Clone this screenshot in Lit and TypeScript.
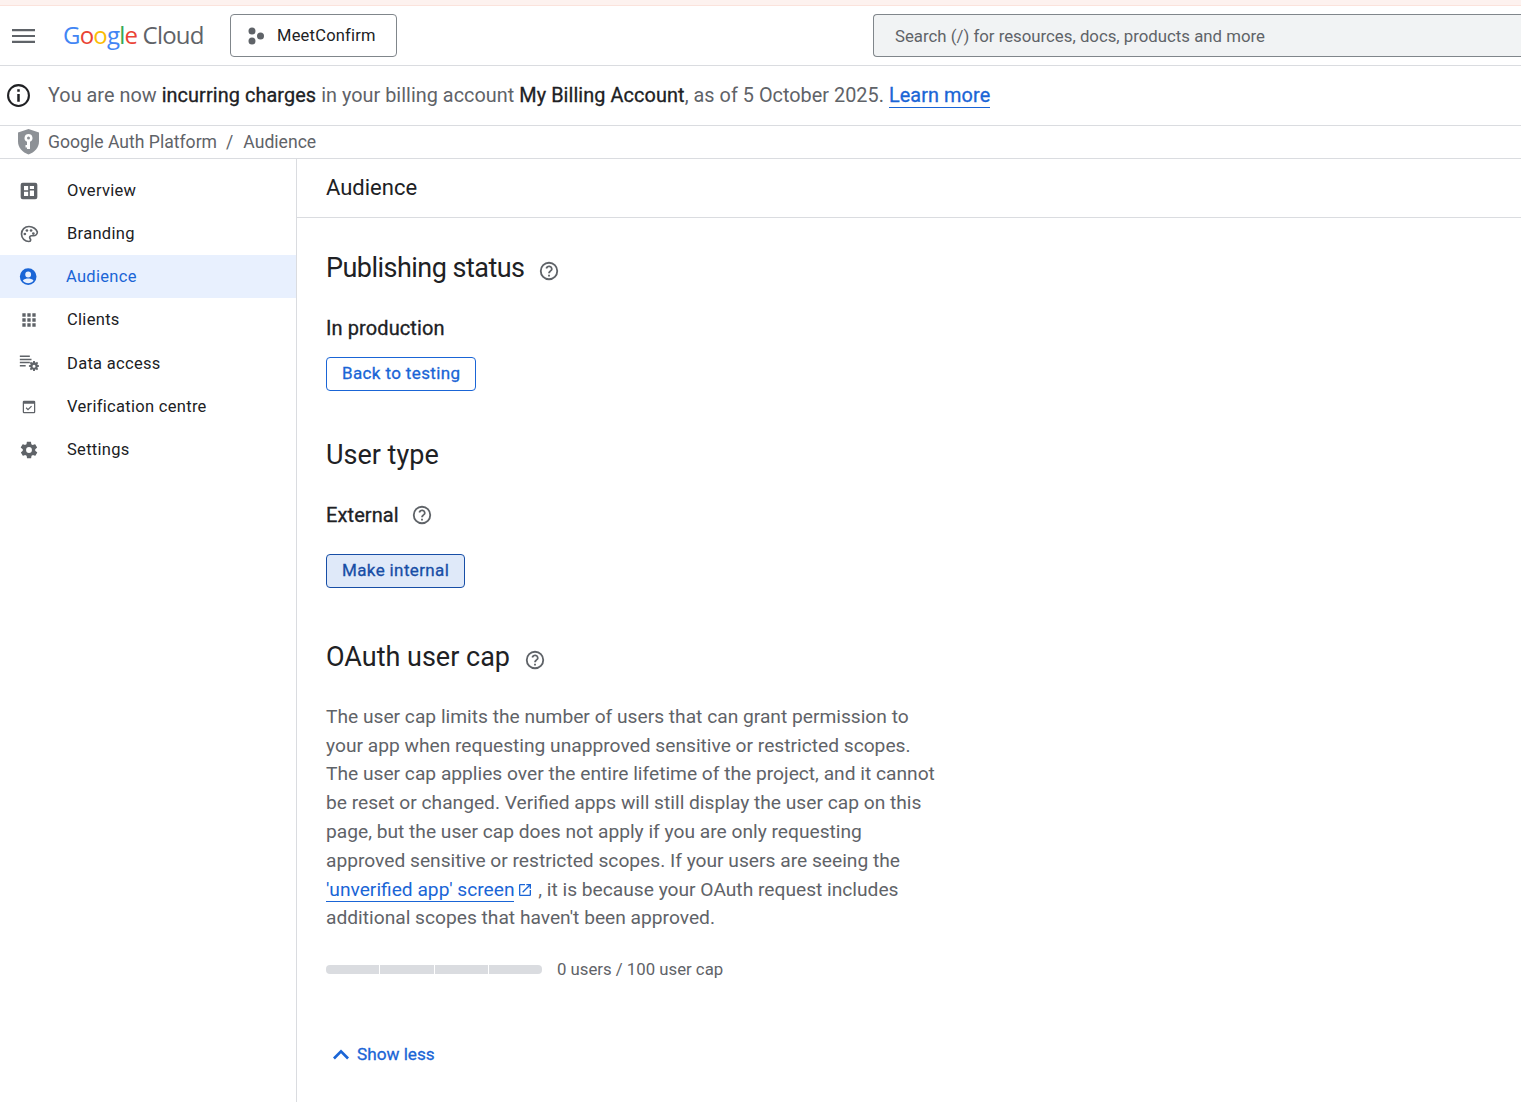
import { LitElement, html, css, svg } from 'lit';
import { customElement } from 'lit/decorators.js';

const icons: Record<string, unknown> = {
  overview: svg`<path fill-rule="evenodd" d="M4.500 2h15A2.500 2.500 0 0 1 22 4.500v15a2.500 2.500 0 0 1-2.500 2.500h-15A2.500 2.500 0 0 1 2 19.500v-15A2.500 2.500 0 0 1 4.500 2zM6 6v5h5V6zm7 0v3.500h5V6zm0 5.500V18h5v-6.500zM6 13v5h5v-5z"/>`,
  branding: svg`<path fill="none" stroke="currentColor" stroke-width="2" d="M12 3C6.900 3 3 7 3 12s4 9 9 9c1.200 0 2-.8 2-1.900 0-.6-.3-1-.6-1.400-.4-.4-.6-.9-.6-1.400 0-1.300 1-2.200 2.300-2.200h2.200c2.600 0 4.700-2 4.700-4.600C21 6.400 17 3 12 3z"/><circle cx="7" cy="12" r="1.600"/><circle cx="9.500" cy="7.800" r="1.600"/><circle cx="14.500" cy="7.800" r="1.600"/><circle cx="17.200" cy="11.500" r="1.600"/>`,
  audience: svg`<path d="M11 1.500a10 10 0 1 0 0 20 10 10 0 0 0 0-20zm0 4a3.500 3.500 0 1 1 0 7 3.500 3.500 0 0 1 0-7zm0 14c-2.700 0-5-1.300-6.400-3.300C5.900 14.500 9 13.800 11 13.800s5.100.7 6.400 2.400C16 18.200 13.700 19.500 11 19.500z" fill-rule="evenodd"/>`,
  clients: svg`<path d="M4 4h4v4H4zm6 0h4v4h-4zm6 0h4v4h-4zM4 10h4v4H4zm6 0h4v4h-4zm6 0h4v4h-4zM4 16h4v4H4zm6 0h4v4h-4zm6 0h4v4h-4z"/>`,
  data: svg`<path d="M1 3h12v1.800H1zm0 3.800h14v1.800H1zm0 3.800h12v1.800H1zm0 3.800h7v1.800H1z"/><path fill-rule="evenodd" d="M17 9.500h2l.3 1.700.9.400 1.400-1 1.400 1.400-1 1.400.4.900 1.700.3v2l-1.700.3-.4.900 1 1.400-1.400 1.400-1.400-1-.9.400-.3 1.700h-2l-.3-1.700-.9-.4-1.400 1-1.400-1.400 1-1.400-.4-.9-1.700-.3v-2l1.700-.3.4-.9-1-1.400 1.400-1.400 1.400 1 .9-.4zm1 4.500a1.800 1.800 0 1 0 0 3.600 1.800 1.800 0 0 0 0-3.600z"/>`,
  verify: svg`<path fill-rule="evenodd" d="M6 4.500h12A1.500 1.500 0 0 1 19.500 6v12a1.500 1.500 0 0 1-1.500 1.500H6A1.500 1.500 0 0 1 4.500 18V6A1.500 1.500 0 0 1 6 4.500zM6 8v10h12V8z"/><path d="M10.800 16.200L8 13.400l1-1 1.800 1.800 3.800-3.800 1 1z"/>`,
  settings: svg`<path fill-rule="evenodd" d="M19.400 13c.1-.3.100-.7.100-1s0-.7-.1-1l2.100-1.600c.2-.1.200-.4.100-.6l-2-3.500c-.1-.2-.4-.3-.6-.2l-2.500 1c-.5-.4-1.100-.7-1.700-1l-.4-2.600c0-.3-.2-.5-.5-.5h-4c-.3 0-.5.200-.5.400l-.4 2.700c-.6.200-1.200.6-1.700 1l-2.500-1c-.2-.1-.5 0-.6.200l-2 3.500c-.1.200-.1.500.1.600L4.600 11c-.1.300-.1.700-.1 1s0 .7.100 1l-2.100 1.600c-.2.100-.2.400-.1.600l2 3.500c.1.200.4.300.6.200l2.500-1c.5.400 1.100.7 1.700 1l.4 2.600c0 .3.2.500.5.500h4c.3 0 .5-.2.500-.4l.4-2.700c.6-.2 1.200-.6 1.700-1l2.500 1c.2.100.5 0 .6-.2l2-3.500c.1-.2.100-.5-.1-.6zM12 15.500a3.500 3.500 0 1 1 0-7 3.500 3.500 0 0 1 0 7z"/>`,
};

const navItems = [
  { id: 'overview', label: 'Overview', h: 43 },
  { id: 'branding', label: 'Branding', h: 43 },
  { id: 'audience', label: 'Audience', h: 43, active: true },
  { id: 'clients', label: 'Clients', h: 43 },
  { id: 'data', label: 'Data access', h: 44 },
  { id: 'verify', label: 'Verification centre', h: 43 },
  { id: 'settings', label: 'Settings', h: 43 },
];

const helpIcon = html`<svg class="help" viewBox="0 0 24 24"><path fill-rule="evenodd" d="M12 2a10 10 0 1 0 0 20 10 10 0 0 0 0-20zm0 18a8 8 0 1 1 0-16 8 8 0 0 1 0 16z"/><path d="M11 16h2v2h-2zM12.600 6.100c-2-.3-3.900 1-4.400 2.900l1.800.6c.3-1 1.300-1.800 2.400-1.600 1 .1 1.800 1 1.600 2.100-.2 1.500-2.900 1.700-2.900 4.400h2c0-1.900 2.800-2.200 2.900-4.400.1-1.900-1.200-3.700-3.400-4z"/></svg>`;

@customElement('app-root')
export class AppRoot extends LitElement {
  static styles = css`
    :host {
      display: block;
      height: 1102px;
      overflow: hidden;
      background: #fff;
      color: #202124;
      font-family: Roboto, 'Liberation Sans', sans-serif;
      font-size: 16.5px;
    }
    svg { display: block; fill: currentColor; flex: none; }
    a { color: #1a65d6; text-decoration: none; }
    .strip { height: 5px; background: #fdf2ef; border-bottom: 1px solid #fbe3dc; }
    .topbar {
      height: 60px;
      box-sizing: border-box;
      border-bottom: 1px solid #dadce0;
      display: flex;
      align-items: center;
      padding-left: 12px;
    }
    .menu { width: 23px; height: 16px; color: #5f6368; }
    .logo {
      margin-left: 28px;
      width: 139px;
      font-size: 24px;
      letter-spacing: -0.8px;
      white-space: nowrap;
      font-family: 'Open Sans', Roboto, sans-serif;
      color: #5f6368;
      padding-bottom: 2px;
    }
    .b { color: #4285f4; } .r { color: #ea4335; } .y { color: #fbbc05; } .g { color: #34a853; }
    .project {
      margin-left: 28px;
      width: 167px;
      height: 43px;
      box-sizing: border-box;
      border: 1px solid #80868b;
      border-radius: 4px;
      display: flex;
      align-items: center;
      padding-left: 16px;
      gap: 12px;
      letter-spacing: 0.22px;
    }
    .project svg { width: 18px; height: 18px; color: #5f6368; }
    .search {
      margin-left: 476px;
      flex: 1;
      height: 43px;
      box-sizing: border-box;
      border: 1px solid #80868b;
      border-right: none;
      border-radius: 4px 0 0 4px;
      background: #f1f3f4;
      display: flex;
      align-items: center;
      padding-left: 21px;
      color: #5f6368;
      font-size: 16.8px;
    }
    .banner {
      height: 60px;
      box-sizing: border-box;
      border-bottom: 1px solid #dadce0;
      display: flex;
      align-items: center;
      padding-left: 6px;
      gap: 17px;
      font-size: 19.83px;
      letter-spacing: 0.03px;
      color: #5f6368;
      white-space: nowrap;
    }
    .banner svg { width: 25px; height: 25px; color: #202124; }
    .banner b { font-weight: 400; color: #202124; -webkit-text-stroke: 0.3px currentColor; letter-spacing: 0.1px; }
    .banner a { border-bottom: 1px solid #1a65d6; -webkit-text-stroke: 0.3px currentColor; letter-spacing: 0.1px; }
    .crumbs {
      height: 33px;
      box-sizing: border-box;
      border-bottom: 1px solid #dadce0;
      display: flex;
      align-items: center;
      padding-left: 17px;
      color: #5f6368;
      font-size: 17.6px;
    }
    .crumbs svg { width: 23px; height: 26px; margin-right: 8px; }
    .sep { margin: 0 10px 0 9px; }
    .body { display: flex; height: 943px; }
    nav { width: 297px; box-sizing: border-box; border-right: 1px solid #dadce0; padding-top: 10px; }
    .item { display: flex; align-items: center; padding-left: 19px; gap: 28px; letter-spacing: 0.3px; }
    .item svg { width: 20px; height: 20px; color: #5f6368; }
    .item.active { background: #e8f0fe; color: #1a65d6; }
    .item.active svg { color: #1a65d6; }
    .item.active span { margin-left: -1px; }
    main { flex: 1; }
    .title {
      height: 59px;
      box-sizing: border-box;
      border-bottom: 1px solid #dadce0;
      padding: 15px 0 0 29px;
      font-size: 22px;
      line-height: 28px;
    }
    .content { padding: 0 0 0 29px; }
    h2 {
      margin: 0;
      font-size: 27px;
      font-weight: 400;
      line-height: 34px;
      display: flex;
      align-items: center;
    }
    h2.tight { letter-spacing: -0.53px; }
    .help { width: 22px; height: 22px; color: #5f6368; }
    h2 .help { margin: 5px 0 0 14px; }
    .status { font-size: 20px; line-height: 24px; display: flex; align-items: center; gap: 12px; -webkit-text-stroke: 0.3px currentColor; letter-spacing: 0.1px; }
    .status svg { stroke: none; }
    .btn {
      display: inline-flex;
      align-items: center;
      height: 34px;
      box-sizing: border-box;
      padding: 0 15px 2px;
      border: 1px solid #1a65d6;
      border-radius: 4px;
      color: #1a65d6;
      font-size: 17px;
      -webkit-text-stroke: 0.3px currentColor;
      letter-spacing: 0.37px;
    }
    .btn.pressed { background: #dfe9f9; color: #174ea6; border-color: #174ea6; padding: 0 14.5px 3px 15px; }
    p {
      margin: 0;
      font-size: 19.2px;
      line-height: 28.8px;
      color: #5f6368;
      white-space: nowrap;
    }
    p a { border-bottom: 1px solid #1a65d6; }
    .ext-link { display: inline-block; width: 16px; height: 16px; vertical-align: -2px; margin-left: 3px; color: #1a65d6; }
    .cap { display: flex; align-items: center; gap: 15px; color: #5f6368; font-size: 16.75px; }
    .bar { display: flex; gap: 1px; width: 216px; height: 9px; border-radius: 4px; overflow: hidden; }
    .bar i { flex: 1; background: #dadce0; }
    .more { display: flex; align-items: center; gap: 4px; margin-left: 3px; color: #1a65d6; font-size: 17.2px; -webkit-text-stroke: 0.3px currentColor; }
    .more svg { width: 24px; height: 24px; }
  `;

  render() {
    return html`
      <div class="strip"></div>
      <header class="topbar">
        <svg class="menu" viewBox="0 0 23 16"><path d="M0 1h23v2.200H0zM0 6.900h23v2.200H0zM0 12.800h23V15H0z"/></svg>
        <div class="logo"><span class="b">G</span><span class="r">o</span><span class="y">o</span><span class="b">g</span><span class="g">l</span><span class="r">e</span> Cloud</div>
        <div class="project">
          <svg viewBox="0 0 18 18"><circle cx="5" cy="4" r="3.500"/><circle cx="5" cy="14" r="3.500"/><circle cx="13.500" cy="9" r="3.500"/></svg>
          <span>MeetConfirm</span>
        </div>
        <div class="search">Search (/) for resources, docs, products and more</div>
      </header>
      <div class="banner">
        <svg viewBox="0 0 24 24"><path fill-rule="evenodd" d="M12 1a11 11 0 1 0 0 22 11 11 0 0 0 0-22zm0 2a9 9 0 1 1 0 18 9 9 0 0 1 0-18z"/><path d="M10.800 10.500h2.400V18h-2.400zM10.800 6h2.400v2.400h-2.400z"/></svg>
        <div>You are now <b>incurring charges</b> in your billing account <b>My Billing Account</b>, as of 5 October 2025. <a href="#">Learn more</a></div>
      </div>
      <div class="crumbs">
        <svg viewBox="0 0 23 26"><path fill="#8d9196" d="M11.500 0L22 3.500v9c0 6-4.400 10.800-10.500 13C5.400 23.300 1 18.500 1 12.500v-9z"/><path fill="#fff" fill-rule="evenodd" d="M11.500 5a4 4 0 0 1 1.500 7.700V20h-3v-1.500H8.500V16H10v-3.300A4 4 0 0 1 11.500 5zm0 2.500a1.500 1.500 0 1 0 0 3 1.500 1.500 0 0 0 0-3z"/></svg>
        <span>Google Auth Platform</span><span class="sep">/</span><span>Audience</span>
      </div>
      <div class="body">
        <nav>
          ${navItems.map(
            (item) => html`
              <div class="item ${item.active ? 'active' : ''}" style="height:${item.h}px">
                <svg viewBox="0 0 24 24">${icons[item.id]}</svg>
                <span>${item.label}</span>
              </div>
            `
          )}
        </nav>
        <main>
          <div class="title">Audience</div>
          <div class="content">
            <h2 class="tight" style="margin-top:33px">Publishing status ${helpIcon}</h2>
            <div class="status" style="margin-top:31px">In production</div>
            <div style="margin-top:17px"><a class="btn" href="#">Back to testing</a></div>
            <h2 style="margin-top:47px">User type</h2>
            <div class="status" style="margin-top:31px">External ${helpIcon}</div>
            <div style="margin-top:27px"><a class="btn pressed" href="#">Make internal</a></div>
            <h2 style="margin-top:52px">OAuth user cap ${helpIcon}</h2>
            <p style="margin-top:28.8px">
              The user cap limits the number of users that can grant permission to<br />
              your app when requesting unapproved sensitive or restricted scopes.<br />
              The user cap applies over the entire lifetime of the project, and it cannot<br />
              be reset or changed. Verified apps will still display the user cap on this<br />
              page, but the user cap does not apply if you are only requesting<br />
              approved sensitive or restricted scopes. If your users are seeing the<br />
              <a href="#">'unverified app' screen</a><svg class="ext-link" viewBox="0 0 24 24"><path d="M19 19H5V5h7V3H5a2 2 0 0 0-2 2v14a2 2 0 0 0 2 2h14a2 2 0 0 0 2-2v-7h-2zM14 3v2h3.600l-9.800 9.800 1.400 1.400L19 6.400V10h2V3z"/></svg> , it is because your OAuth request includes<br />
              additional scopes that haven't been approved.
            </p>
            <div class="cap" style="margin-top:26.2px">
              <div class="bar"><i></i><i></i><i></i><i></i></div>
              <span>0 users / 100 user cap</span>
            </div>
            <a class="more" href="#" style="margin-top:63px">
              <svg viewBox="0 0 24 24"><path d="M12 7.500l8 8-1.900 1.900-6.100-6.100-6.100 6.100L4 15.500z"/></svg>
              <span>Show less</span>
            </a>
          </div>
        </main>
      </div>
    `;
  }
}
